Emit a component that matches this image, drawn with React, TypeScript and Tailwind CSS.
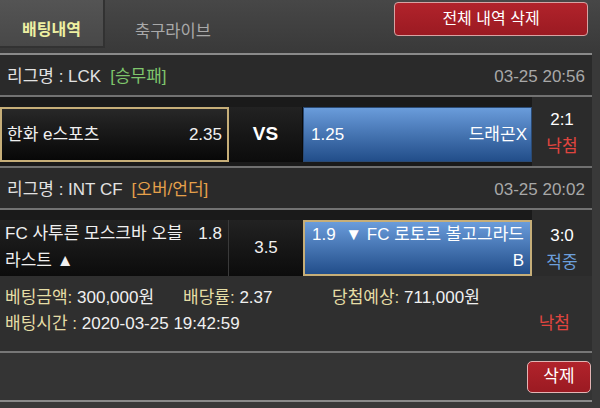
const FONT = "font-['Liberation_Sans','Noto_Sans_CJK_KR',sans-serif]"

function LeagueRow({ league, tag, tagColor, time }: { league: string; tag: string; tagColor: string; time: string }) {
  return (
    <div className="h-[42px] bg-[#2a2a2a] flex items-center justify-between pt-[3px] pl-[7px] pr-[7px] border-b-2 border-[#727272]">
      <div className="flex items-center text-[17px] text-[#e2e2e2]">
        <span>{league}</span>
        <span className={`ml-[9px] ${tagColor}`}>{tag}</span>
      </div>
      <span className="text-[17px] text-[#a8a8a8]">{time}</span>
    </div>
  )
}

export default function App() {
  return (
    <div className={`w-[600px] h-[408px] overflow-hidden bg-[#393939] ${FONT}`}>
      {/* top bar */}
      <div className="flex h-[53px] bg-gradient-to-b from-[#474747] to-[#393939]">
        <div className="w-[105px] h-[48px] flex items-center justify-center pt-[14px] bg-gradient-to-b from-[#545454] to-[#484848] border-r-2 border-b-2 border-[#323232] text-[16px] font-bold text-[#eef0a2]">
          배팅내역
        </div>
        <div className="h-[48px] flex items-center pt-[14px] pl-[30px] text-[16.5px] text-[#a9a9a9]">축구라이브</div>
        <button className="ml-auto mr-[12px] mt-[2px] w-[194px] h-[34px] rounded-[4px] border border-[#d8a2a2] bg-gradient-to-b from-[#b1232b] to-[#9b1a22] text-white text-[16px]">
          전체 내역 삭제
        </button>
      </div>

      <div className="w-[592px]">
        <div className="h-[2px] bg-[#8a8a8a]" />

        <LeagueRow league="리그명 : LCK" tag="[승무패]" tagColor="text-[#7fc56c]" time="03-25 20:56" />

        {/* match 1 */}
        <div className="flex border-b-2 border-[#707070]">
          <div className="flex w-[532px] pt-[10px] pb-[4px] bg-[#1a1a1a]">
            <div className="w-[229px] h-[55px] flex items-center justify-between pl-[5px] pr-[5px] border-2 border-[#c6ae78] bg-gradient-to-b from-[#282828] to-[#080808]">
              <span className="text-[17px] text-[#f0f0f0]">한화 e스포츠</span>
              <span className="text-[17px] text-[#f0f0f0]">2.35</span>
            </div>
            <div className="w-[74px] h-[55px] flex items-center justify-center bg-gradient-to-b from-[#222] to-[#0c0c0c] border-r border-[#0a0a0a]">
              <span className="text-[19px] font-bold text-white">VS</span>
            </div>
            <div className="w-[229px] h-[55px] flex items-center justify-between pl-[7px] pr-[4px] border border-[#2a4a74] bg-gradient-to-b from-[#6a9cdb] to-[#224e8a]">
              <span className="text-[17px] text-white">1.25</span>
              <span className="text-[17px] text-white">드래곤X</span>
            </div>
          </div>
          <div className="flex-1 bg-[#2b2b2b] flex flex-col items-center justify-center pt-[2px] leading-[27px]">
            <span className="text-[17px] text-white">2:1</span>
            <span className="text-[17px] text-[#e0453f]">낙첨</span>
          </div>
        </div>

        <LeagueRow league="리그명 : INT CF" tag="[오버/언더]" tagColor="text-[#e5a04a]" time="03-25 20:02" />

        {/* match 2 */}
        <div className="flex">
          <div className="flex w-[532px] pt-[10px] bg-[#1a1a1a]">
            <div className="w-[229px] h-[56px] flex justify-between pl-[5px] pr-[6px] border-r border-[#3a3a3a] bg-gradient-to-b from-[#222] to-[#0c0c0c] leading-[27px]">
              <span className="w-[180px] text-[17px] text-[#f0f0f0]">FC 사투른 모스크바 오블라스트 ▲</span>
              <span className="text-[17px] text-[#f0f0f0]">1.8</span>
            </div>
            <div className="w-[74px] h-[56px] flex items-center justify-center bg-gradient-to-b from-[#222] to-[#0c0c0c]">
              <span className="text-[17px] text-[#f0f0f0]">3.5</span>
            </div>
            <div className="w-[229px] h-[56px] flex justify-between pl-[7px] pr-[6px] border-2 border-[#c6ae78] bg-gradient-to-b from-[#6a9cdb] to-[#224e8a] leading-[26px]">
              <span className="text-[17px] text-white">1.9</span>
              <span className="w-[184px] text-right text-[17px] text-white">▼ FC 로토르 볼고그라드 B</span>
            </div>
          </div>
          <div className="flex-1 bg-[#2b2b2b] flex flex-col items-center justify-end pt-[10px] leading-[27px]">
            <span className="text-[17px] text-white">3:0</span>
            <span className="text-[17px] text-[#6c9fdc]">적중</span>
          </div>
        </div>

        {/* bet info */}
        <div className="bg-[#2f2f2f] pt-[9px] pb-[14px] pl-[5px] leading-[26px] text-[17px] border-b-2 border-[#777]">
          <div className="flex">
            <span className="w-[178px]">
              <span className="text-[#e5dda5]">베팅금액: </span>
              <span className="text-[#f0f0f0]">300,000원</span>
            </span>
            <span className="w-[149px]">
              <span className="text-[#e5dda5]">배당률: </span>
              <span className="text-[#f0f0f0]">2.37</span>
            </span>
            <span>
              <span className="text-[#e5dda5]">당첨예상: </span>
              <span className="text-[#f0f0f0]">711,000원</span>
            </span>
          </div>
          <div className="flex">
            <span>
              <span className="text-[#e5dda5]">배팅시간 : </span>
              <span className="text-[#f0f0f0]">2020-03-25 19:42:59</span>
            </span>
            <span className="ml-auto mr-[22px] text-[#e0453f]">낙첨</span>
          </div>
        </div>

        {/* footer */}
        <div className="h-[49px] bg-[#343434] flex items-center justify-end pr-[1px] border-b-2 border-[#8a8a8a]">
          <button className="w-[64px] h-[32px] rounded-[5px] border border-[#e3b4b4] bg-gradient-to-b from-[#b1232b] to-[#9b1a22] text-white text-[17px]">
            삭제
          </button>
        </div>
      </div>
    </div>
  )
}
